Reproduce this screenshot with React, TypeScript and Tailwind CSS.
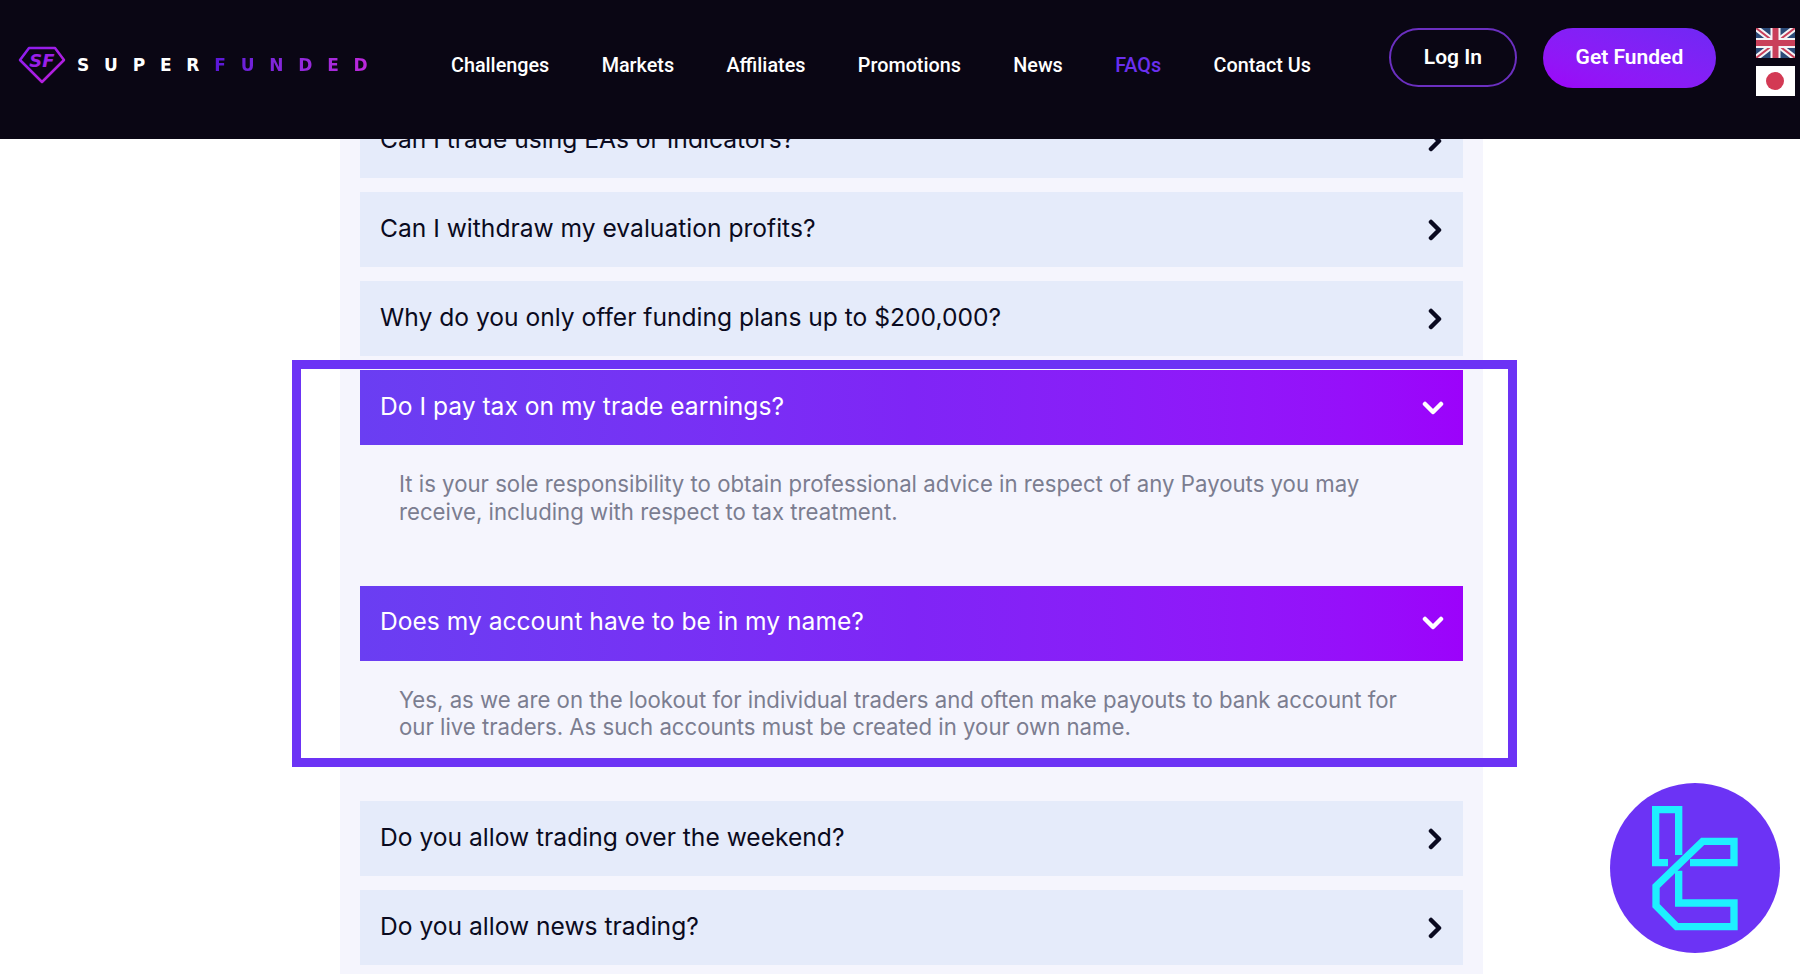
import { ReactNode } from "react";

const navLinks = ["Challenges", "Markets", "Affiliates", "Promotions", "News", "FAQs", "Contact Us"];

const ChevronRight = () => (
  <svg width="16" height="22" viewBox="0 0 16 22" fill="none" className="shrink-0">
    <path d="M4 3l8 8-8 8" stroke="#0a0a20" strokeWidth="4.5" strokeLinecap="round" strokeLinejoin="round" />
  </svg>
);

const ChevronDown = () => (
  <svg width="22" height="16" viewBox="0 0 22 16" fill="none" className="shrink-0">
    <path d="M3 4l8 8 8-8" stroke="#ffffff" strokeWidth="4.5" strokeLinecap="round" strokeLinejoin="round" />
  </svg>
);

const Logo = () => (
  <div className="flex items-center">
    <svg width="48" height="38" viewBox="0 0 48 38" fill="none">
      <defs>
        <linearGradient id="sf" x1="0" y1="0" x2="1" y2="1">
          <stop offset="0" stopColor="#8a1df0" />
          <stop offset="1" stopColor="#c01fd8" />
        </linearGradient>
      </defs>
      <path d="M11 2h26l9 12-22 22L2 14z" stroke="url(#sf)" strokeWidth="2.5" strokeLinejoin="round" />
      <text x="24" y="21" textAnchor="middle" fontFamily="DejaVu Sans" fontWeight="700" fontStyle="italic" fontSize="18" fill="#9a1fe8">
        SF
      </text>
    </svg>
    <div className="ml-[11px] flex font-['DejaVu_Sans',sans-serif] text-[17px] leading-none font-bold tracking-[14.8px]">
      <span className="text-white">SUPER</span>
      <span className="bg-linear-to-r from-[#5a16d8] to-[#c824dc] bg-clip-text text-transparent">FUNDED</span>
    </div>
  </div>
);

const UkFlag = () => (
  <svg width="39" height="30" viewBox="0 0 39 30" className="block">
    <rect width="39" height="30" fill="#2b4a78" />
    <path d="M0 0l39 30M39 0L0 30" stroke="#f4f4f6" strokeWidth="6" />
    <path d="M0 0l39 30M39 0L0 30" stroke="#c9405a" strokeWidth="2" />
    <path d="M19.5 0v30M0 15h39" stroke="#f4f4f6" strokeWidth="10" />
    <path d="M19.5 0v30M0 15h39" stroke="#c9405a" strokeWidth="6" />
  </svg>
);

const JapanFlag = () => (
  <div className="flex h-[30px] w-[39px] items-center justify-center bg-white">
    <div className="h-[18px] w-[18px] rounded-full bg-[#d33a54]" />
  </div>
);

const Header = () => (
  <header className="relative z-10 flex h-[139px] items-start bg-[#0a0614] font-['Roboto',sans-serif]">
    <div className="mt-[46px] ml-[18px] w-[433px] shrink-0">
      <Logo />
    </div>
    <nav className="mt-[54px] flex gap-[52.4px] text-[19.8px] leading-[24px] font-medium text-white">
      {navLinks.map((link) => (
        <a key={link} className={link === "FAQs" ? "text-[#6b2ff0]" : ""}>
          {link}
        </a>
      ))}
    </nav>
    <div className="mt-[28px] ml-[78px] flex gap-[26px] text-[21px] font-semibold text-white">
      <button className="flex h-[59px] w-[128px] items-center justify-center rounded-full border-2 border-[#6b2fc0]">
        Log In
      </button>
      <button className="flex h-[60px] w-[173px] items-center justify-center rounded-full bg-linear-to-tr from-[#9d03f8] to-[#6f28f4]">
        Get Funded
      </button>
    </div>
    <div className="mt-[28px] ml-[40px] flex flex-col gap-[8px]">
      <UkFlag />
      <JapanFlag />
    </div>
  </header>
);

const Question = ({ text, open, children }: { text: string; open?: boolean; children?: ReactNode }) => (
  <div>
    <div
      className={
        open
          ? "flex h-[75px] items-center justify-between bg-linear-to-r from-[#6a3ef2] via-[#7f25f6] to-[#9c02fb] pr-[19px] pl-[20px] text-white"
          : "flex h-[75px] items-center justify-between bg-[#e5ebfa] pr-[20px] pl-[20px] text-[#0a0a20]"
      }
    >
      <span className="pb-[3px] text-[24.6px]">{text}</span>
      {open ? <ChevronDown /> : <ChevronRight />}
    </div>
    {open && (
      <div className="h-[126.5px] pt-[25px] pr-[40px] pl-[39px] text-[22.2px] leading-[27.5px] text-[#7b7d90]">
        {children}
      </div>
    )}
  </div>
);

const FaqList = () => (
  <main className="-mt-[36px] ml-[340px] flex w-[1143px] flex-col gap-[14px] bg-[#f5f5fd] px-[20px] pb-[20px] font-['Inter',sans-serif]">
    <Question text="Can I trade using EAs or Indicators?" />
    <Question text="Can I withdraw my evaluation profits?" />
    <Question text="Why do you only offer funding plans up to $200,000?" />
    <Question text="Do I pay tax on my trade earnings?" open>
      It is your sole responsibility to obtain professional advice in respect of any Payouts you may receive, including
      with respect to tax treatment.
    </Question>
    <Question text="Does my account have to be in my name?" open>
      Yes, as we are on the lookout for individual traders and often make payouts to bank account for our live traders.
      As such accounts must be created in your own name.
    </Question>
    <Question text="Do you allow trading over the weekend?" />
    <Question text="Do you allow news trading?" />
  </main>
);

const Badge = () => (
  <svg width="170" height="170" viewBox="90 72 510 510" fill="none" className="absolute top-[783px] left-[1610px] z-20">
    <circle cx="345" cy="327" r="255" fill="#6c33f5" />
    <path
      d="M296 288V152H227V311H264M330 311H462V247H368L228 382V440L290 503H462V432H296V335"
      stroke="#1ef0ff"
      strokeWidth="22"
    />
  </svg>
);

export default function App() {
  return (
    <div className="relative h-[974px] w-[1800px] overflow-hidden bg-white">
      <Header />
      <FaqList />
      {/* purple highlight drawn over the two open questions */}
      <div className="absolute top-[360px] left-[292px] z-20 h-[407px] w-[1225px] border-[9px] border-[#6c33f5]" />
      <Badge />
    </div>
  );
}
